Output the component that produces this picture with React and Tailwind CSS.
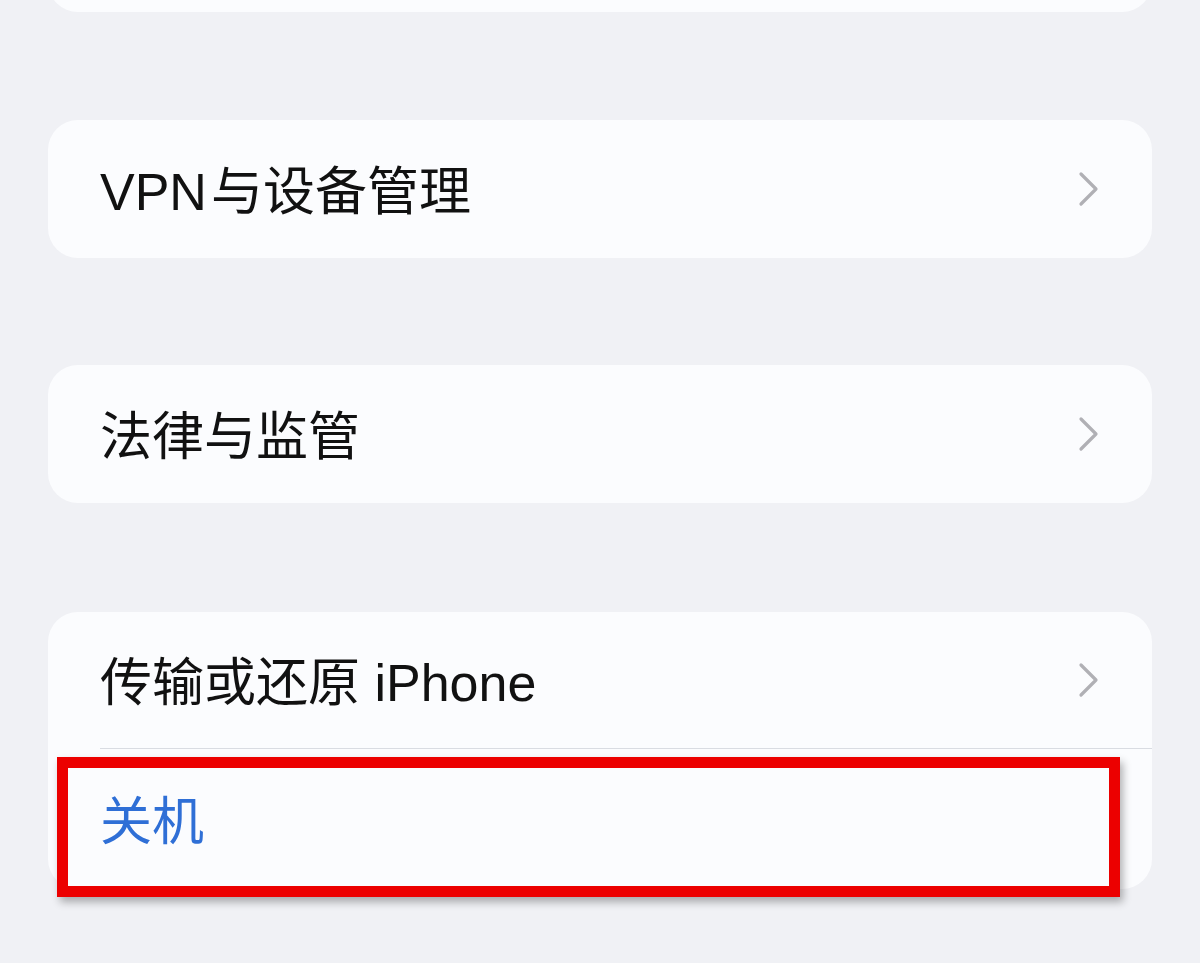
const font = { fontFamily: '"Liberation Sans", "Noto Sans CJK SC", sans-serif' }

function Chevron() {
  return (
    <svg width="22" height="36" viewBox="0 0 22 36" fill="none" className="text-[#b0b0b5]">
      <path d="M3 3 L18 18 L3 33" stroke="currentColor" strokeWidth="3.2" strokeLinecap="round" strokeLinejoin="round" />
    </svg>
  )
}

function Row({ label, chevron = true, className = '' }) {
  return (
    <div className={`flex items-center justify-between pl-[52px] pr-[52px] ${className}`}>
      <span className="pt-[5px] text-[52px] leading-none text-[#111]">{label}</span>
      {chevron && <Chevron />}
    </div>
  )
}

export default function App() {
  return (
    <div className="min-h-screen bg-[#f0f1f5] px-[48px] overflow-hidden" style={font}>
      {/* group above, scrolled off */}
      <div className="-mt-[128px] h-[140px] bg-[#fbfcfe] rounded-[30px]" />

      <div className="mt-[108px] bg-[#fbfcfe] rounded-[30px]">
        <Row label={<>VPN<span className="ml-[4px]">与设备管理</span></>} className="h-[138px]" />
      </div>

      <div className="mt-[107px] bg-[#fbfcfe] rounded-[30px]">
        <Row label="法律与监管" className="h-[138px]" />
      </div>

      <div className="mt-[109px] bg-[#fbfcfe] rounded-[30px]">
        <Row label="传输或还原 iPhone" className="h-[136px]" />
        <div className="ml-[52px] h-px bg-[#d9dce2]" />
        <div className="relative h-[140px] flex items-center pl-[52px]">
          <span className="pt-[6px] text-[52px] leading-none text-[#2f6fd6]">关机</span>
          {/* highlight frame */}
          <div className="absolute left-[9px] top-[8px] w-[1063px] h-[140px] border-[11px] border-[#ec0000] shadow-[3px_5px_8px_rgba(0,0,0,0.3)]" />
        </div>
      </div>
    </div>
  )
}
